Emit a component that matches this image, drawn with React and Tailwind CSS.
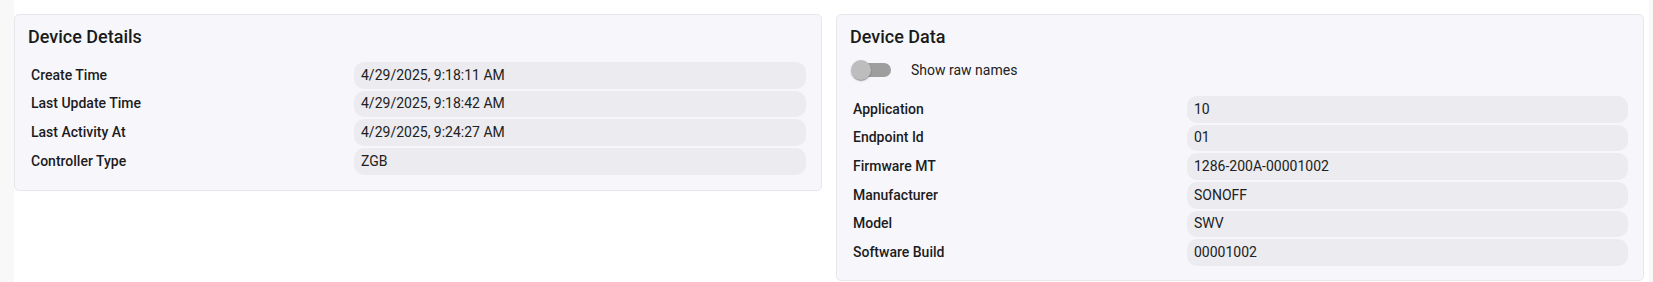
import React from "react";

const details = [
  ["Create Time", "4/29/2025, 9:18:11 AM"],
  ["Last Update Time", "4/29/2025, 9:18:42 AM"],
  ["Last Activity At", "4/29/2025, 9:24:27 AM"],
  ["Controller Type", "ZGB"],
];

const data = [
  ["Application", "10"],
  ["Endpoint Id", "01"],
  ["Firmware MT", "1286-200A-00001002"],
  ["Manufacturer", "SONOFF"],
  ["Model", "SWV"],
  ["Software Build", "00001002"],
];

function Row({ label, value, labelW }) {
  return (
    <div className="flex items-center h-[26.67px]">
      <div className={`${labelW} shrink-0 pl-[3px] text-[14px] font-medium text-[#1c1c1e]`}>
        {label}
      </div>
      <div className="flex-1 h-full flex items-center rounded-[10px] bg-[#ebebf0] pl-[7px] text-[14px] text-[#212121]">
        {value}
      </div>
    </div>
  );
}

export default function App() {
  return (
    <div className="w-full h-[282px] flex bg-white overflow-hidden font-['Roboto','Noto_Sans',sans-serif]">
      <div className="w-[14px] shrink-0 bg-[#f8f8f9]" />
      <div className="flex gap-[14px] items-start pt-[14px]">
        {/* Device Details */}
        <div className="w-[808px] shrink-0 rounded-[5px] border border-[#e6e6ec] bg-[#f7f7fb] pl-[13px] pr-[15px] pt-[8px] pb-[15px]">
          <div className="h-[28px] leading-[28px] text-[18px] font-medium text-[#1a1a1a]">
            Device Details
          </div>
          <div className="mt-[11px] flex flex-col gap-[2px]">
            {details.map(([l, v]) => (
              <Row key={l} label={l} value={v} labelW="w-[326px]" />
            ))}
          </div>
        </div>
        {/* Device Data */}
        <div className="w-[808px] shrink-0 rounded-[5px] border border-[#e6e6ec] bg-[#f7f7fb] pl-[13px] pr-[15px] pt-[8px] pb-[14px]">
          <div className="h-[28px] leading-[28px] text-[18px] font-medium text-[#1a1a1a]">
            Device Data
          </div>
          <div className="h-[38px] flex items-center">
            <div className="relative w-[40px] h-[20px] ml-[1px] shrink-0">
              <div className="absolute left-[2px] right-0 top-[3px] h-[14px] rounded-full bg-[#9e9e9e]" />
              <div className="absolute left-0 top-0 w-[20px] h-[20px] rounded-full bg-[#bdbdbd] shadow-[0_2px_1px_-1px_rgba(0,0,0,0.2),0_1px_1px_0_rgba(0,0,0,0.14),0_1px_3px_0_rgba(0,0,0,0.12)]" />
            </div>
            <span className="ml-[20px] text-[14px] text-[#212121]">Show raw names</span>
          </div>
          <div className="mt-[7px] flex flex-col gap-[2px]">
            {data.map(([l, v]) => (
              <Row key={l} label={l} value={v} labelW="w-[337px]" />
            ))}
          </div>
        </div>
      </div>
      <div className="flex-1" />
      <div className="w-[4px] shrink-0 bg-[#f8f8f9]" />
    </div>
  );
}
